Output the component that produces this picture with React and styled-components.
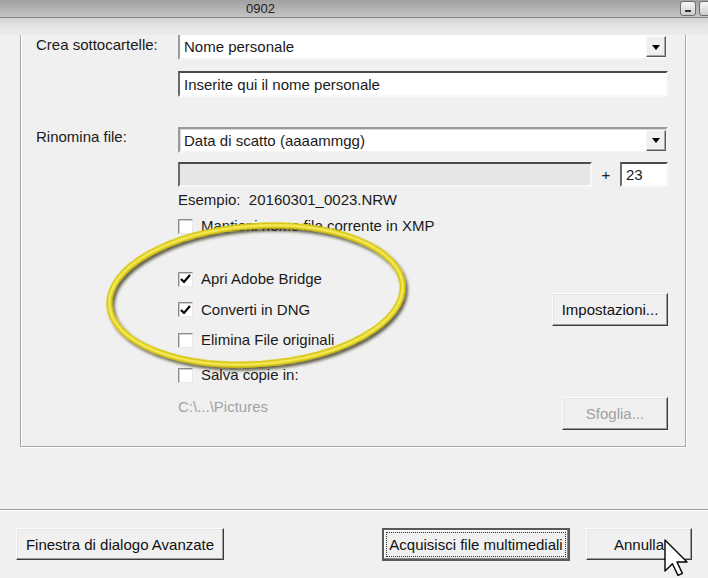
import React from "react";
import styled, { createGlobalStyle, css } from "styled-components";

const GlobalStyle = createGlobalStyle`
  html, body {
    margin: 0;
    padding: 0;
    background: #f0f0f0;
  }
  body {
    font-family: "Liberation Sans", Arial, sans-serif;
    color: #1a1a1a;
  }
`;

// 窗口外框
const Window = styled.div`
  position: relative;
  width: 708px;
  height: 578px;
  overflow: hidden;
  background: #f0f0f0;
  display: flex;
  flex-direction: column;
`;

const TitleBar = styled.div`
  height: 17px;
  flex: none;
  display: flex;
  align-items: center;
  background: linear-gradient(#a0a0a0, #c4c4c4);
  border-bottom: 1px solid #858585;
`;

const Title = styled.span`
  margin-left: 246px;
  font-family: "Liberation Sans Narrow", "Liberation Sans", sans-serif;
  font-size: 13px;
  color: #202020;
`;

const Caption = styled.div`
  margin-left: auto;
  margin-right: -7px;
  display: flex;
  gap: 3px;
`;

const CaptionButton = styled.div`
  width: 14px;
  height: 13px;
  border: 1px solid #6d6d6d;
  border-radius: 3px;
  background: linear-gradient(#f6f6f6, #cdcdcd);
  display: flex;
  align-items: flex-end;
  justify-content: center;
  &::after {
    content: "";
    width: 6px;
    height: 2px;
    margin-bottom: 3px;
    background: ${(p) => (p.$min ? "#333" : "transparent")};
  }
`;

const Band = styled.div`
  height: 17px;
  flex: none;
  background: linear-gradient(#d4d4d4, #e2e2e2 40%, #ececec);
`;

const Main = styled.div`
  height: 475px;
  flex: none;
  overflow: hidden;
  padding-left: 20px;
  box-sizing: border-box;
  border-bottom: 1px solid #a0a0a0;
  box-shadow: 0 1px 0 #fff;
`;

const Group = styled.div`
  width: 666px;
  box-sizing: border-box;
  border: 1px solid #a8a8a8;
  border-top: none;
  box-shadow: 1px 1px 0 #fff, inset 1px 0 0 #fff;
  padding: 0 17px 16px 15px;
  display: flex;
  flex-direction: column;
`;

const Row = styled.div`
  display: flex;
  align-items: ${(p) => p.$align || "center"};
  margin-top: ${(p) => p.$mt || 0}px;
`;

const Label = styled.div`
  width: 142px;
  flex: none;
  font-size: 15px;
  line-height: 18px;
  align-self: flex-start;
  padding-top: ${(p) => p.$pt || 0}px;
`;

const Field = styled.div`
  width: 490px;
  flex: none;
  display: flex;
  align-items: ${(p) => p.$align || "center"};
`;

const sunken = css`
  box-sizing: border-box;
  border: 2px solid;
  border-color: #6e6e6e #f4f4f4 #f4f4f4 #6e6e6e;
  box-shadow: inset 1px 1px 0 #3a3a3a;
`;

const Combo = styled.div`
  ${sunken};
  width: ${(p) => p.$w || 490}px;
  height: ${(p) => p.$h || 26}px;
  background: #fff;
  display: flex;
  align-items: center;
  padding-left: 4px;
  font-size: 15px;
  border-color: #9a9a9a #f4f4f4 #f4f4f4 #9a9a9a;
  box-shadow: inset 1px 1px 0 #d8d8d8;
  ${(p) =>
    p.$clipped &&
    css`
      border-top: none;
      box-shadow: none;
    `}
`;

const ComboText = styled.span`
  flex: 1;
`;

const DropButton = styled.div`
  width: 20px;
  height: 21px;
  box-sizing: border-box;
  border: 1px solid;
  border-color: #f8f8f8 #5a5a5a #5a5a5a #f8f8f8;
  box-shadow: inset -1px -1px 0 #a8a8a8;
  background: #f0f0f0;
  display: flex;
  align-items: center;
  justify-content: center;
  &::after {
    content: "";
    border-left: 4px solid transparent;
    border-right: 4px solid transparent;
    border-top: 5px solid #000;
    margin-top: 1px;
  }
`;

const TextBox = styled.div`
  ${sunken};
  width: ${(p) => p.$w || 490}px;
  height: ${(p) => p.$h || 26}px;
  background: ${(p) => (p.$disabled ? "#e6e6e6" : "#fff")};
  display: flex;
  align-items: center;
  padding-left: 4px;
  font-size: 15px;
  border-color: #4a4a4a #f8f8f8 #f8f8f8 #6a6a6a;
  box-shadow: none;
`;

const Plus = styled.span`
  width: 28px;
  text-align: center;
  font-size: 15px;
`;

const Note = styled.div`
  font-size: 15px;
  line-height: 18px;
  white-space: pre;
  color: ${(p) => (p.$disabled ? "#a2a2a2" : "#1a1a1a")};
  margin-top: ${(p) => p.$mt || 0}px;
`;

const Check = styled.label`
  display: flex;
  align-items: center;
  gap: 8px;
  font-size: 15px;
  line-height: 18px;
`;

const Box = styled.span`
  ${sunken};
  width: 15px;
  height: 15px;
  background: #fff;
  border-width: 1px;
  border-color: #8a8a8a #e8e8e8 #e8e8e8 #8a8a8a;
  box-shadow: inset 1px 1px 0 #cfcfcf;
  display: flex;
  align-items: center;
  justify-content: center;
`;

const Button = styled.div`
  position: relative;
  margin-left: ${(p) => (p.$push ? "auto" : "0")};
  width: ${(p) => p.$w}px;
  height: ${(p) => p.$h || 33}px;
  box-sizing: border-box;
  background: #f0f0f0;
  border: 1px solid;
  border-color: #fcfcfc #3c3c3c #3c3c3c #fcfcfc;
  box-shadow: inset -1px -1px 0 #9c9c9c, inset 1px 1px 0 #e6e6e6;
  display: flex;
  align-items: center;
  justify-content: center;
  font-size: 15px;
  color: ${(p) => (p.$disabled ? "#a0a0a0" : "#111")};
  ${(p) =>
    p.$default &&
    css`
      border: 2px solid #5a5a5a;
      box-shadow: inset -1px -1px 0 #8a8a8a, inset 1px 1px 0 #fff;
      &::after {
        content: "";
        position: absolute;
        inset: 2px;
        border: 1px dotted #333;
      }
    `}
`;

const Footer = styled.div`
  flex: 1;
  display: flex;
  align-items: flex-start;
  padding: 18px 16px 0 16px;
  gap: 16px;
`;

const Overlay = styled.svg`
  position: absolute;
  left: 0;
  top: 0;
  pointer-events: none;
`;

const Tick = () => (
  <svg width="11" height="10" viewBox="0 0 11 10">
    <path d="M1 5 L4 8 L10 1" fill="none" stroke="#000" strokeWidth="2.2" />
  </svg>
);

const CheckItem = ({ checked, children }) => (
  <Check>
    <Box>{checked && <Tick />}</Box>
    {children}
  </Check>
);

export default function App() {
  return (
    <>
      <GlobalStyle />
      <Window>
        <TitleBar>
          <Title>0902</Title>
          <Caption>
            <CaptionButton $min />
            <CaptionButton />
          </Caption>
        </TitleBar>
        <Band />
        <Main>
          <Group>
            <Row $align="flex-start">
              <Label $pt={1}>Crea sottocartelle:</Label>
              <Field>
                <Combo $clipped $h={25}>
                  <ComboText>Nome personale</ComboText>
                  <DropButton />
                </Combo>
              </Field>
            </Row>
            <Row $mt={11}>
              <Label />
              <Field>
                <TextBox>Inserite qui il nome personale</TextBox>
              </Field>
            </Row>
            <Row $mt={30} $align="flex-start">
              <Label $pt={1}>Rinomina file:</Label>
              <Field>
                <Combo>
                  <ComboText>Data di scatto (aaaammgg)</ComboText>
                  <DropButton />
                </Combo>
              </Field>
            </Row>
            <Row $mt={9}>
              <Label />
              <Field>
                <TextBox $disabled $w={414} $h={25} />
                <Plus>+</Plus>
                <TextBox $w={48} $h={25}>23</TextBox>
              </Field>
            </Row>
            <Row $mt={4}>
              <Label />
              <Field>
                <Note>{"Esempio:  20160301_0023.NRW"}</Note>
              </Field>
            </Row>
            <Row $mt={8}>
              <Label />
              <Field>
                <CheckItem>Mantieni nome file corrente in XMP</CheckItem>
              </Field>
            </Row>
            <Row $mt={35}>
              <Label />
              <Field>
                <CheckItem checked>Apri Adobe Bridge</CheckItem>
              </Field>
            </Row>
            <Row $mt={5}>
              <Label />
              <Field>
                <CheckItem checked>Converti in DNG</CheckItem>
                <Button $push $w={116}>Impostazioni...</Button>
              </Field>
            </Row>
            <Row $mt={5}>
              <Label />
              <Field>
                <CheckItem>Elimina File originali</CheckItem>
              </Field>
            </Row>
            <Row $mt={17}>
              <Label />
              <Field>
                <CheckItem>Salva copie in:</CheckItem>
              </Field>
            </Row>
            <Row $mt={13}>
              <Label />
              <Field $align="flex-start">
                <Note $disabled $mt={1}>{"C:\\...\\Pictures"}</Note>
                <Button $push $disabled $w={106}>Sfoglia...</Button>
              </Field>
            </Row>
          </Group>
        </Main>
        <Footer>
          <Button $w={208} $h={32}>Finestra di dialogo Avanzate</Button>
          <Button $push $default $w={188}>Acquisisci file multimediali</Button>
          <Button $w={106} $h={32}>Annulla</Button>
        </Footer>

        <Overlay width="708" height="578" viewBox="0 0 708 578">
          <defs>
            <filter id="shade" x="-20%" y="-20%" width="140%" height="140%">
              <feDropShadow dx="2" dy="3" stdDeviation="1.6" floodColor="#2e2e10" floodOpacity="0.75" />
            </filter>
          </defs>
          <g transform="rotate(-4 256 295)" filter="url(#shade)">
            <ellipse cx="256" cy="295" rx="147" ry="69" fill="none" stroke="#d9c60f" strokeWidth="6" />
            <ellipse cx="256" cy="295" rx="147" ry="69" fill="none" stroke="#f3e956" strokeWidth="2.5" />
          </g>
          <g transform="translate(664 539) scale(2)">
            <path
              d="M0.5 0.5 L0.5 16 L4.2 12.4 L7 18.2 L9.2 17.2 L6.5 11.5 L11.5 11.5 Z"
              fill="#fff"
              stroke="#000"
              strokeWidth="0.7"
              strokeLinejoin="round"
            />
          </g>
        </Overlay>
      </Window>
    </>
  );
}
